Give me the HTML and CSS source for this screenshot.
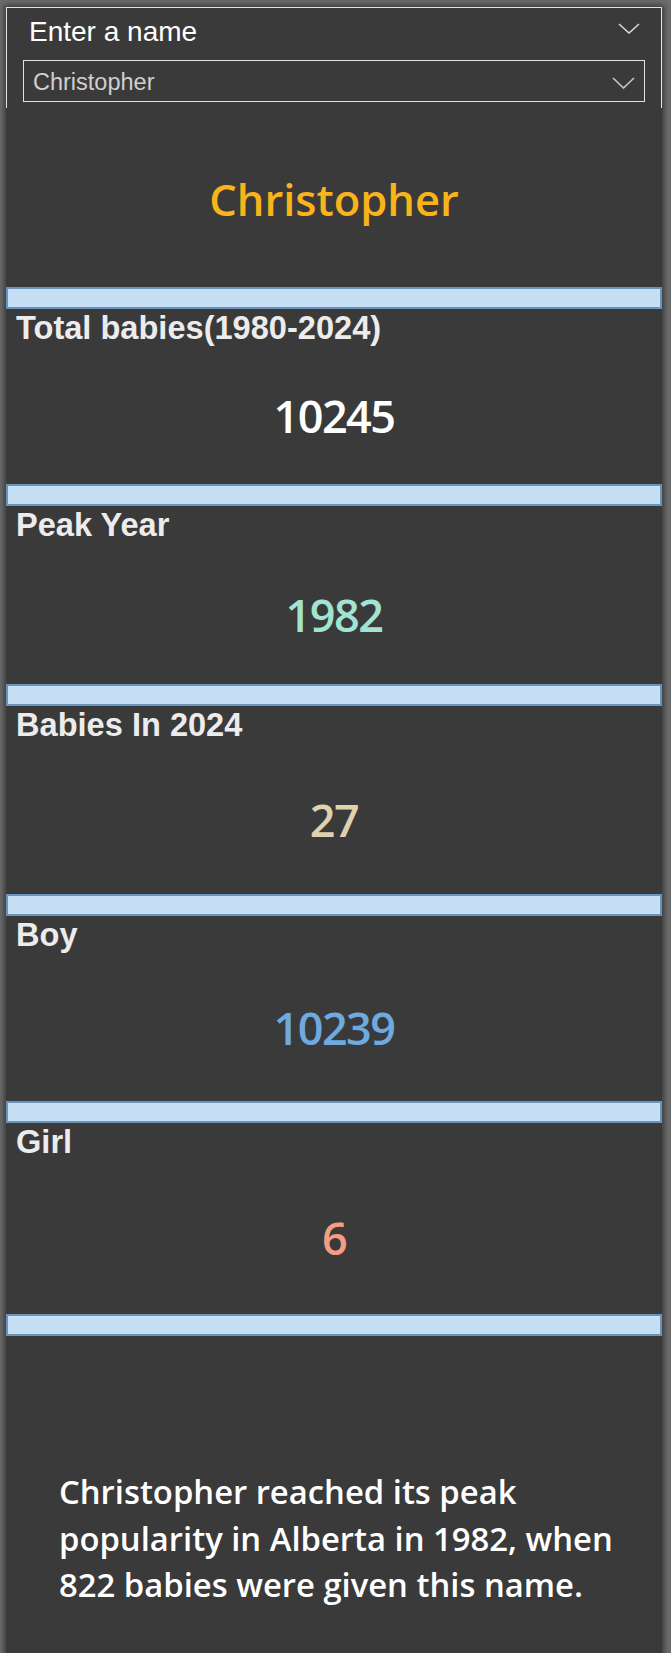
FILE: index.html
```html
<!DOCTYPE html>
<html lang="en">
<head>
<meta charset="utf-8">
<title>Baby name explorer</title>
<link rel="stylesheet" href="styles.css">
</head>
<body>
<div class="frame">
  <section class="slicer">
    <div class="slicer-head">
      <span class="slicer-label">Enter a name</span>
      <svg class="chev chev-head" viewBox="0 0 22 11" width="22" height="11"><polyline points="1,1 11,10 21,1"/></svg>
    </div>
    <div class="dropdown">
      <span class="dropdown-value">Christopher</span>
      <svg class="chev chev-box" viewBox="0 0 23 12" width="23" height="12"><polyline points="1,1 11.5,11 22,1"/></svg>
    </div>
  </section>
  <main class="board">
    <div class="name-title">Christopher</div>
    <div class="bar"></div>
    <div class="card card-1">
      <div class="card-title">Total babies(1980-2024)</div>
      <div class="card-value v-white">10245</div>
    </div>
    <div class="bar"></div>
    <div class="card card-2">
      <div class="card-title">Peak Year</div>
      <div class="card-value v-mint">1982</div>
    </div>
    <div class="bar"></div>
    <div class="card card-3">
      <div class="card-title">Babies In 2024</div>
      <div class="card-value v-sand">27</div>
    </div>
    <div class="bar"></div>
    <div class="card card-4">
      <div class="card-title">Boy</div>
      <div class="card-value v-blue">10239</div>
    </div>
    <div class="bar"></div>
    <div class="card card-5">
      <div class="card-title">Girl</div>
      <div class="card-value v-salmon">6</div>
    </div>
    <div class="bar"></div>
    <div class="summary">
      <p>Christopher reached its peak popularity in Alberta in 1982, when 822 babies were given this name.</p>
    </div>
  </main>
</div>
</body>
</html>
```
FILE: styles.css
```css
html, body {
  margin: 0;
  padding: 0;
}
body {
  background: #6e6e6e;
  width: 671px;
  height: 1653px;
  overflow: hidden;
}
.frame {
  margin: 7px 0 0 6px;
  width: 656px;
  box-shadow: 0 0 6px 2px rgba(45, 45, 45, 0.85);
}
.slicer {
  box-sizing: border-box;
  height: 101px;
  border: 1px solid #e4e4e4;
  border-bottom: none;
  background: #3a3a3a;
  padding: 8px 16px 0 16px;
}
.slicer-head {
  display: flex;
  align-items: center;
  justify-content: space-between;
  height: 31px;
  padding: 0 5px 0 6px;
}
.slicer-label {
  font-family: "Liberation Sans", Arial, sans-serif;
  font-size: 28px;
  line-height: 31px;
  color: #ffffff;
}
.chev {
  fill: none;
  stroke: #d6d6d6;
  stroke-width: 1.6;
}
.chev-head {
  margin-top: -6px;
}
.dropdown {
  box-sizing: border-box;
  margin-top: 13px;
  height: 42px;
  border: 1px solid #e2e2e2;
  display: flex;
  align-items: center;
  justify-content: space-between;
  padding: 2px 9px 0 9px;
}
.dropdown-value {
  font-family: "Liberation Sans", Arial, sans-serif;
  font-size: 23.5px;
  line-height: 38px;
  color: #cfcfcf;
}
.chev-box {
  margin-top: 2px;
  stroke: #c8c8c8;
}
.board {
  background: #3a3a3a;
  height: 1545px;
  display: flex;
  flex-direction: column;
}
.name-title {
  box-sizing: border-box;
  height: 179px;
  padding-top: 62px;
  text-align: center;
  font-family: "Open Sans", "Noto Sans", sans-serif;
  font-weight: 600;
  font-size: 43.5px;
  line-height: 60px;
  color: #f9b31b;
}
.bar {
  box-sizing: border-box;
  height: 22px;
  background: #c6dff4;
  border: 2px solid #6a93b9;
  flex: none;
}
.card {
  box-sizing: border-box;
  display: flex;
  flex-direction: column;
  padding-top: 1px;
  flex: none;
}
.card-1 { height: 175px; }
.card-2 { height: 178px; }
.card-3 { height: 188px; }
.card-4 { height: 185px; }
.card-5 { height: 191px; }
.card-title {
  padding-left: 10px;
  font-family: "Liberation Sans", Arial, sans-serif;
  font-weight: 700;
  font-size: 32.6px;
  line-height: 36px;
  color: #ececec;
}
.card-value {
  flex: 1;
  display: flex;
  align-items: center;
  justify-content: center;
  padding-top: 2px;
  font-family: "Open Sans", "Noto Sans", sans-serif;
  font-weight: 600;
  font-size: 45px;
  line-height: 60px;
  letter-spacing: -1.5px;
}
.v-white { color: #ffffff; }
.v-mint { color: #a2e4d2; }
.v-sand { color: #dfd0b0; }
.v-blue { color: #6eaadf; }
.v-salmon { color: #f59d82; }
.summary {
  flex: 1;
  padding: 133px 28px 0 53px;
}
.summary p {
  margin: 0;
  font-family: "Open Sans", "Noto Sans", sans-serif;
  font-weight: 600;
  font-size: 32.8px;
  line-height: 46.5px;
  color: #ffffff;
}
```
